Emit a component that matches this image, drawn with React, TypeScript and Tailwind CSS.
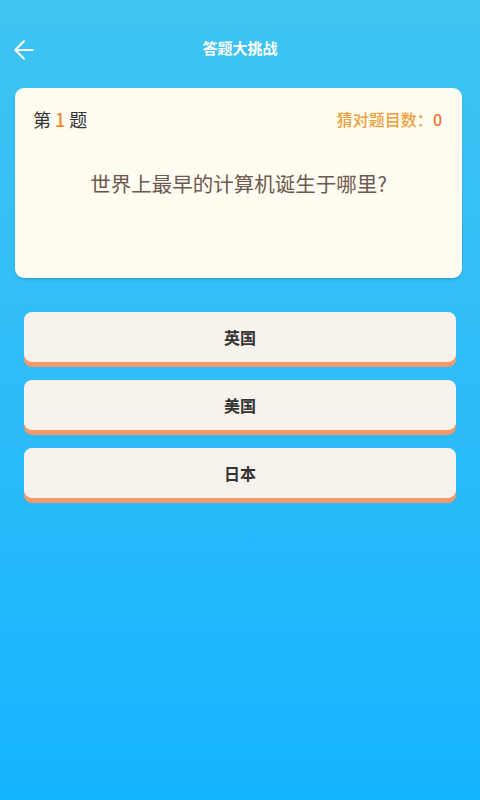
import { ArrowLeft } from 'lucide-react';

const options = ['英国', '美国', '日本'];

export default function App() {
  return (
    <div
      className="flex flex-col min-h-[800px] w-full bg-gradient-to-b from-[#3fc4f2] to-[#13b4ff]"
      style={{ fontFamily: '"Noto Sans CJK SC", "Noto Sans", sans-serif' }}
    >
      {/* Header */}
      <header className="relative h-[88px] flex items-center justify-center pt-[8px]">
        <button className="absolute left-[9px] top-[35px] text-white">
          <ArrowLeft size={30} strokeWidth={1.5} />
        </button>
        <h1 className="text-[15px] font-bold text-white">答题大挑战</h1>
      </header>

      {/* Question card */}
      <div className="mx-[15px] w-[447px] h-[190px] rounded-[9px] bg-[#fffcf2] shadow-[0_2px_3px_rgba(0,0,0,0.12)] px-[18px] pt-[17px]">
        <div className="flex items-center justify-between">
          <div className="text-[18px] text-[#333] leading-[28px]">
            第 <span className="text-[#f08c2e] font-medium">1</span> 题
          </div>
          <div className="text-[16px] text-[#efa13c] leading-[28px] font-medium pr-[2px]">
            猜对题目数：<span className="text-[#ee7234]">0</span>
          </div>
        </div>
        <p className="mt-[36px] text-center text-[20.5px] text-[#6d584f] leading-[28px]">
          世界上最早的计算机诞生于哪里?
        </p>
      </div>

      {/* Options */}
      <div className="flex flex-col gap-[18px] mt-[34px] px-[24px]">
        {options.map(opt => (
          <button
            key={opt}
            className="h-[50px] w-[432px] rounded-[8px] bg-[#f8f2ed] shadow-[0_5px_0_#f6976c] text-[16px] font-bold text-[#333]"
          >
            {opt}
          </button>
        ))}
      </div>
    </div>
  );
}
